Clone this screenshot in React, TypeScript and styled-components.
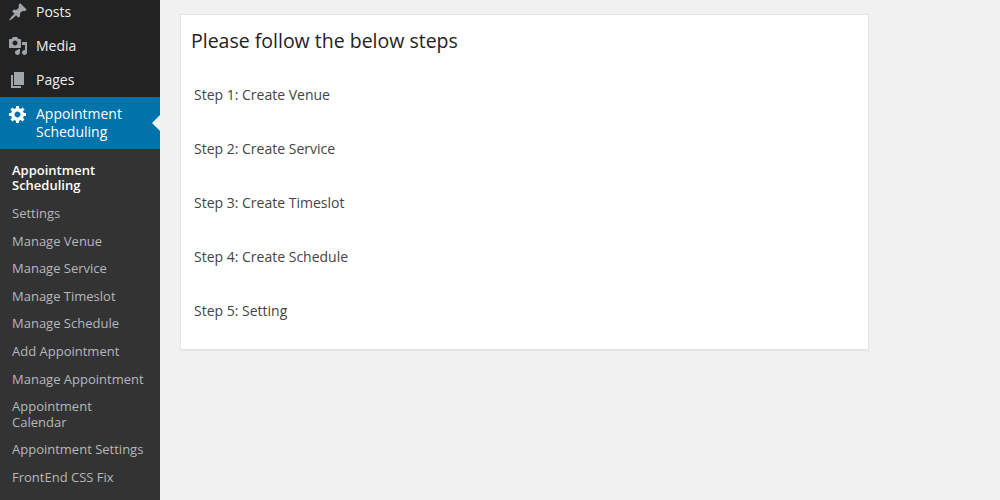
import React from 'react';
import styled, { createGlobalStyle } from 'styled-components';

const GlobalStyle = createGlobalStyle`
  html, body {
    margin: 0;
    padding: 0;
    height: 500px;
    overflow: hidden;
    background: #f1f1f1;
    font-family: "Open Sans", sans-serif;
  }
`

const Layout = styled.div`
  display: flex;
  height: 500px;
  overflow: hidden;
`

const Sidebar = styled.nav`
  flex: 0 0 160px;
  width: 160px;
  background: #222;
  overflow: hidden;
`

// the admin menu is scrolled 5px past the top of the window
const Menu = styled.ul`
  list-style: none;
  margin: -5px 0 0;
  padding: 0;
`

const MenuItem = styled.li<{ $current?: boolean }>`
  position: relative;
  display: flex;
  gap: 8px;
  padding: 8px 12px 8px 8px;
  font-size: 14px;
  line-height: 18px;
  color: ${p => (p.$current ? '#fff' : '#eee')};
  background: ${p => (p.$current ? '#0073aa' : 'transparent')};

  svg {
    flex: 0 0 20px;
    width: 20px;
    height: 20px;
    margin: -1px 0 -1px;
    fill: ${p => (p.$current ? '#fff' : '#a0a5aa')};
  }
`

const CurrentArrow = styled.span`
  position: absolute;
  top: 50%;
  right: 0;
  margin-top: -8px;
  border: 8px solid transparent;
  border-left-width: 0;
  border-right-color: #f1f1f1;
`

const SubMenu = styled.ul`
  list-style: none;
  margin: 0;
  padding: 7.8px 0 8px;
  background: #333;
`

const SubItem = styled.li<{ $current?: boolean }>`
  padding: 6px 12px;
  font-size: 13px;
  line-height: 15.6px;
  color: ${p => (p.$current ? '#fff' : '#b4b9be')};
  font-weight: ${p => (p.$current ? 600 : 400)};
`

const Content = styled.main`
  flex: 1;
  padding: 14px 131px 0 20px;
`

const Card = styled.section`
  box-sizing: border-box;
  height: 336px;
  padding: 10px 10px 0;
  background: #fff;
  border: 1px solid #e5e5e5;
  box-shadow: 0 1px 1px rgba(0, 0, 0, 0.04);
`

const Title = styled.h2`
  margin: 0 0 11px;
  font-size: 19.5px;
  font-weight: 400;
  line-height: 32px;
  color: #222;
`

const Step = styled.p`
  margin: 0;
  padding-left: 3px;
  font-size: 14px;
  line-height: 54px;
  color: #444;
`

const icons = {
  posts: 'M10.44 3.02l1.82-1.82 6.36 6.35-1.83 1.82c-1.05-.68-2.48-.57-3.41.36l-.75.75c-.92.93-1.04 2.35-.35 3.41l-1.83 1.82-2.41-2.41-2.8 2.79c-.42.42-3.38 2.71-3.8 2.29s1.86-3.39 2.28-3.81l2.79-2.79L4.1 9.36l1.83-1.82c1.05.69 2.48.57 3.4-.36l.75-.75c.93-.92 1.05-2.35.36-3.41z',
  media: 'M13 11V4c0-.55-.45-1-1-1h-1.67L9 1H5L3.67 3H2c-.55 0-1 .45-1 1v7c0 .55.45 1 1 1h10c.55 0 1-.45 1-1zM7 4.5c1.38 0 2.5 1.12 2.5 2.5S8.38 9.5 7 9.5 4.5 8.38 4.5 7 5.62 4.5 7 4.5zM14 6h5v10.5c0 1.38-1.12 2.5-2.5 2.5S14 17.88 14 16.5s1.12-2.5 2.5-2.5c.17 0 .34.02.5.05V9h-3V6zm-4 8.05V13h2v3.5c0 1.38-1.12 2.5-2.5 2.5S7 17.88 7 16.5 8.12 14 9.5 14c.17 0 .34.02.5.05z',
  pages: 'M6 15V2h10v13H6zm-1 1h8v2H3V5h2v11z',
  gear: 'M18 12h-2.18c-.17.7-.44 1.35-.81 1.93l1.54 1.54-2.1 2.1-1.54-1.54c-.58.36-1.23.63-1.91.79V19H8v-2.18c-.68-.16-1.33-.43-1.91-.79l-1.54 1.54-2.12-2.12 1.54-1.54c-.36-.58-.63-1.23-.79-1.91H1V9.03h2.17c.16-.7.44-1.35.8-1.94L2.43 5.55l2.1-2.1 1.54 1.54c.58-.37 1.24-.64 1.93-.81V2h3v2.18c.68.16 1.33.43 1.91.79l1.54-1.54 2.12 2.12-1.54 1.54c.36.59.64 1.24.8 1.94H18V12zm-8.5 1.5c1.66 0 3-1.34 3-3s-1.34-3-3-3-3 1.34-3 3 1.34 3 3 3z',
}

const Icon: React.FC<{ d: string }> = ({ d }) => (
  <svg viewBox="0 0 20 20"><path d={d} /></svg>
)

const subItems = [
  'Settings',
  'Manage Venue',
  'Manage Service',
  'Manage Timeslot',
  'Manage Schedule',
  'Add Appointment',
  'Manage Appointment',
  'Appointment Calendar',
  'Appointment Settings',
  'FrontEnd CSS Fix',
]

const steps = [
  'Step 1: Create Venue',
  'Step 2: Create Service',
  'Step 3: Create Timeslot',
  'Step 4: Create Schedule',
  'Step 5: Setting',
]

const App: React.FC = () => (
  <>
    <GlobalStyle />
    <Layout>
      <Sidebar>
        <Menu>
          <MenuItem><Icon d={icons.posts} />Posts</MenuItem>
          <MenuItem><Icon d={icons.media} />Media</MenuItem>
          <MenuItem><Icon d={icons.pages} />Pages</MenuItem>
          <MenuItem $current>
            <Icon d={icons.gear} />
            Appointment Scheduling
            <CurrentArrow />
          </MenuItem>
        </Menu>
        <SubMenu>
          <SubItem $current>Appointment Scheduling</SubItem>
          {subItems.map(item => <SubItem key={item}>{item}</SubItem>)}
        </SubMenu>
      </Sidebar>
      <Content>
        <Card>
          <Title>Please follow the below steps</Title>
          {steps.map(step => <Step key={step}>{step}</Step>)}
        </Card>
      </Content>
    </Layout>
  </>
)

export default App;
